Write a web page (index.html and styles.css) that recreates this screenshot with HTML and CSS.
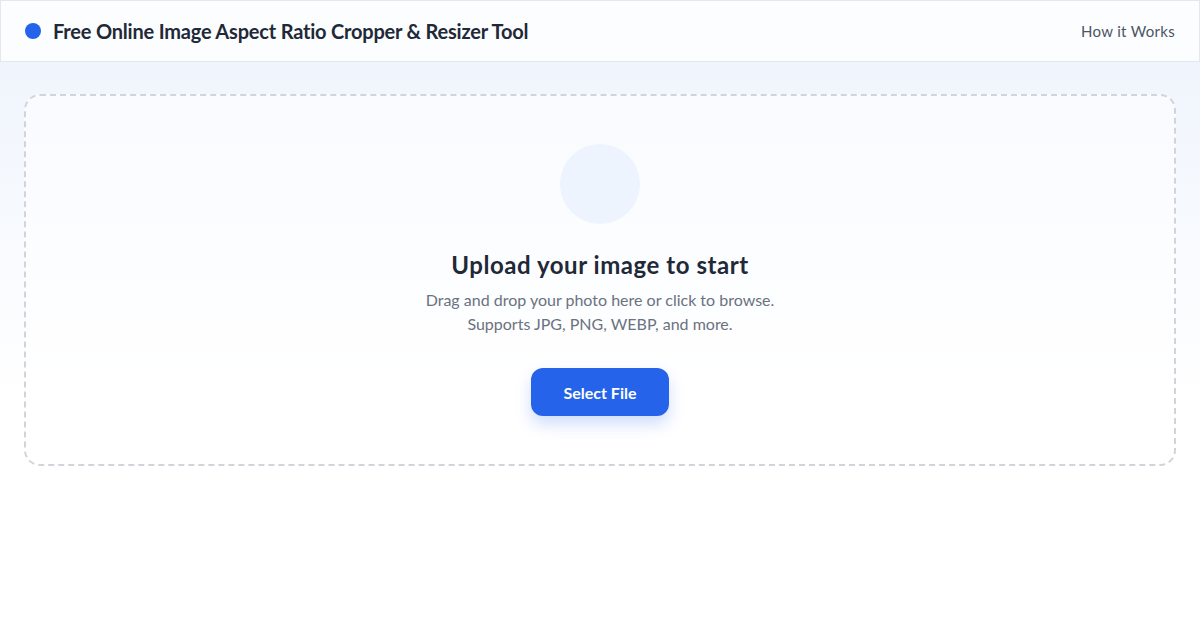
FILE: index.html
```html
<!doctype html>
<html>
<head>
  <meta charset="utf-8">
  <meta name="viewport" content="width=device-width,initial-scale=1">
  <title>Free Online Image Aspect Ratio Cropper &amp; Resizer Tool</title>
  <link rel="stylesheet" href="styles.css">
</head>
<body>
  <header class="topbar">
    <div class="brand">
      <span class="brand-dot"></span>
      <h1 class="brand-title">Free Online Image Aspect Ratio Cropper &amp; Resizer Tool</h1>
    </div>
    <a class="nav-link" href="#how">How it Works</a>
  </header>

  <main class="page">
    <section class="dropzone">
      <div class="drop-icon"></div>
      <h2 class="drop-title">Upload your image to start</h2>
      <p class="drop-text">Drag and drop your photo here or click to browse.<br>Supports JPG, PNG, WEBP, and more.</p>
      <button class="btn-primary" type="button">Select File</button>
    </section>
  </main>
</body>
</html>
```

FILE: styles.css
```css
* {
  box-sizing: border-box;
}
html, body {
  height: 100%;
}
body {
  margin: 0;
  font-family: "Lato", "Inter", "Liberation Sans", sans-serif;
  color: #1f2937;
  background: linear-gradient(180deg, #edf3fc 0, #f6f9fe 200px, #ffffff 400px);
}

/* barra do topo */
.topbar {
  height: 62px;
  display: flex;
  align-items: center;
  justify-content: space-between;
  padding: 0 24px;
  background: rgba(255, 255, 255, 0.8);
  border: 1px solid #e3e8ef;
}
.brand {
  display: flex;
  align-items: center;
  gap: 12px;
}
.brand-dot {
  width: 16px;
  height: 16px;
  border-radius: 50%;
  background: #2563eb;
}
.brand-title {
  margin: 0;
  font-size: 20px;
  font-weight: 700;
  letter-spacing: -0.2px;
  color: #1f2937;
}
.nav-link {
  font-size: 15px;
  letter-spacing: 0.3px;
  color: #4b5563;
  text-decoration: none;
}

/* area de upload */
.page {
  padding: 32px 24px;
}
.dropzone {
  display: flex;
  flex-direction: column;
  align-items: center;
  padding: 48px 24px;
  border: 2px dashed #d1d5db;
  border-radius: 16px;
  background: rgba(255, 255, 255, 0.55);
  text-align: center;
}
.drop-icon {
  width: 80px;
  height: 80px;
  border-radius: 50%;
  background: #eef4fd;
  margin-bottom: 25px;
}
.drop-title {
  margin: 0 0 7px;
  font-size: 24px;
  line-height: 32px;
  font-weight: 700;
  letter-spacing: 0.55px;
  color: #1f2937;
}
.drop-text {
  margin: 0 0 32px;
  font-size: 16px;
  line-height: 24px;
  color: #6b7280;
}
.btn-primary {
  width: 138px;
  height: 48px;
  border: 0;
  border-radius: 12px;
  background: #2563eb;
  color: #ffffff;
  font-family: inherit;
  font-size: 16px;
  font-weight: 700;
  box-shadow: 0 8px 16px rgba(37, 99, 235, 0.22);
  cursor: pointer;
}
```
